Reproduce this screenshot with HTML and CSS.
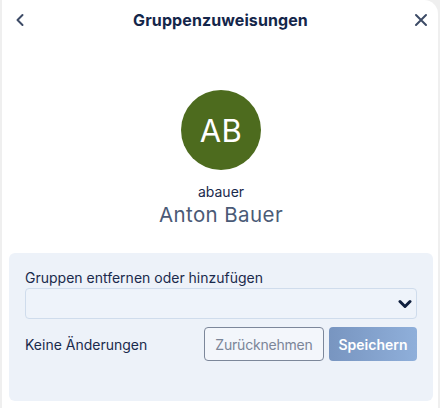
FILE: index.html
```html
<!DOCTYPE html>
<html lang="de">
<head>
<meta charset="utf-8">
<link rel="stylesheet" href="styles.css">
</head>
<body>
<div class="card">
  <header class="head">
    <button class="icon-btn" aria-label="Zurück">
      <svg width="10" height="14" viewBox="0 0 10 14"><path d="M7.5 2 L2.5 7 L7.5 12" fill="none" stroke="#3d4b66" stroke-width="2" stroke-linecap="round" stroke-linejoin="round"/></svg>
    </button>
    <h1 class="title">Gruppenzuweisungen</h1>
    <button class="icon-btn" aria-label="Schließen">
      <svg width="14" height="14" viewBox="0 0 14 14"><path d="M2 2 L12 12 M12 2 L2 12" fill="none" stroke="#3d4b66" stroke-width="2" stroke-linecap="round"/></svg>
    </button>
  </header>
  <section class="user">
    <div class="avatar">AB</div>
    <div class="login">abauer</div>
    <div class="name">Anton Bauer</div>
  </section>
  <section class="panel">
    <label class="label">Gruppen entfernen oder hinzufügen</label>
    <div class="select">
      <svg width="14" height="10" viewBox="0 0 14 10"><path d="M2 2.5 L7 7.5 L12 2.5" fill="none" stroke="#0f1f3d" stroke-width="3" stroke-linecap="round" stroke-linejoin="round"/></svg>
    </div>
    <div class="actions">
      <span class="status">Keine Änderungen</span>
      <div class="buttons">
        <button class="btn btn-outline">Zurücknehmen</button>
        <button class="btn btn-primary">Speichern</button>
      </div>
    </div>
  </section>
</div>
</body>
</html>
```

FILE: styles.css
```css
* { box-sizing: border-box; }
html, body { margin: 0; padding: 0; }
body {
  background: #efefef;
  font-family: Inter, "Noto Sans", sans-serif;
  width: 440px;
  height: 408px;
  overflow: hidden;
}
.card {
  margin-left: 2px;
  width: 436px;
  height: 408px;
  background: #ffffff;
  border-top-right-radius: 14px;
  padding: 0 5px 0 7px;
  display: flex;
  flex-direction: column;
}
.head {
  height: 40px;
  display: flex;
  align-items: center;
  justify-content: space-between;
  padding: 0 2px 0 1px;
}
.icon-btn {
  border: 0;
  background: none;
  padding: 0;
  width: 20px;
  height: 20px;
  display: flex;
  align-items: center;
  justify-content: center;
}
.title {
  margin: 0;
  font-size: 16px;
  font-weight: 700;
  color: #14264a;
  letter-spacing: 0.1px;
}
.user {
  display: flex;
  flex-direction: column;
  align-items: center;
  padding-top: 50px;
  height: 213px;
}
.avatar {
  width: 80px;
  height: 80px;
  border-radius: 50%;
  background: #4d6b1e;
  color: #ffffff;
  font-size: 31px;
  display: flex;
  align-items: center;
  justify-content: center;
  letter-spacing: 0.5px;
}
.login {
  margin-top: 13px;
  font-size: 14px;
  color: #1a2a4c;
}
.name {
  margin-top: 2px;
  font-size: 20.5px;
  color: #4a5a76;
  letter-spacing: 0.4px;
}
.panel {
  background: #edf2f9;
  border-radius: 6px;
  height: 148px;
  padding: 15px 16px 0 16px;
  display: flex;
  flex-direction: column;
}
.label {
  font-size: 14px;
  color: #1a2a4c;
  line-height: 19px;
}
.select {
  margin-top: 1px;
  height: 31px;
  border: 1px solid #cfdcec;
  border-radius: 4px;
  background: #eef3fa;
  display: flex;
  align-items: center;
  justify-content: flex-end;
  padding-right: 4px;
}
.actions {
  margin-top: 8px;
  display: flex;
  align-items: center;
  justify-content: space-between;
}
.status {
  font-size: 14px;
  color: #1a2a4c;
}
.buttons {
  display: flex;
  gap: 5px;
}
.btn {
  height: 34px;
  border-radius: 4px;
  font-family: Inter, "Noto Sans", sans-serif;
  font-size: 14px;
  padding: 0 8px;
}
.btn-outline {
  width: 120px;
  background: #f3f6fb;
  border: 1px solid #7c879a;
  color: #7b8598;
  letter-spacing: -0.2px;
}
.btn-primary {
  width: 88px;
  border: 0;
  color: #ffffff;
  font-weight: 600;
  background: linear-gradient(90deg, #7895c0, #8fafda);
}
```
